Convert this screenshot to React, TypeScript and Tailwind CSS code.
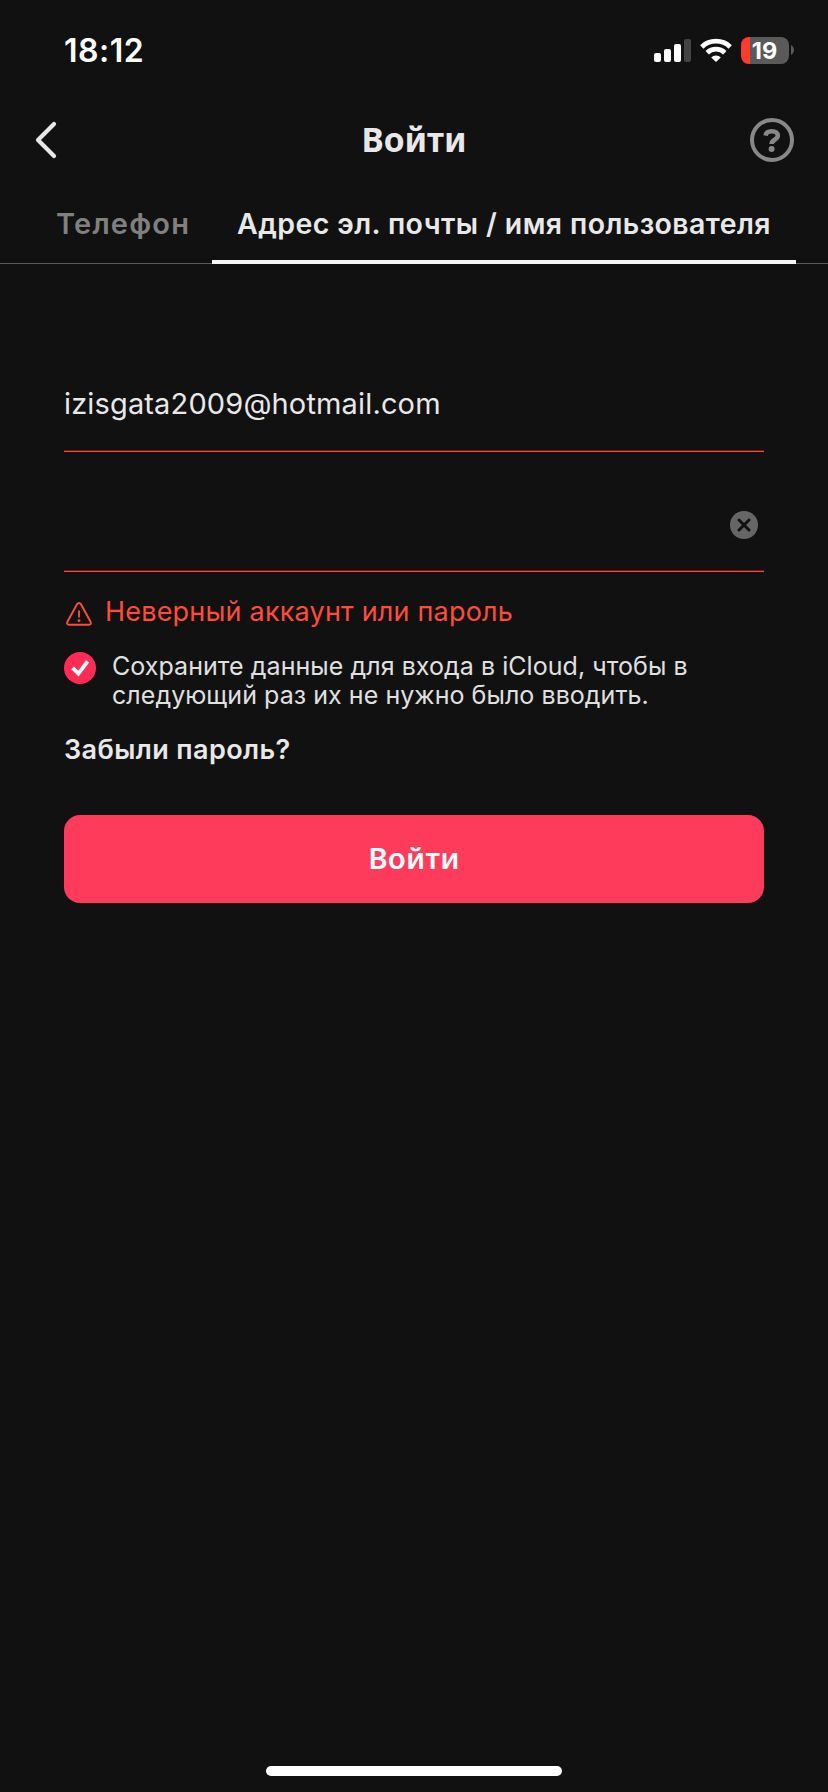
import type { ReactNode } from "react";

function SignalIcon() {
  return (
    <svg className="h-[23px] w-[37px]" viewBox="0 0 37 23">
      <rect x="0" y="14" width="7" height="9" rx="2" fill="#fff" />
      <rect x="10" y="10" width="7" height="13" rx="2" fill="#fff" />
      <rect x="20" y="5" width="7" height="18" rx="2" fill="#fff" />
      <rect x="30" y="0" width="7" height="23" rx="2" fill="#434343" />
    </svg>
  );
}

function WifiIcon() {
  return (
    <svg className="h-[24px] w-[32px]" viewBox="0 0 32 24" fill="none" stroke="#fff" strokeWidth="4.8">
      <path d="M1.8 8.9 A20.5 20.5 0 0 1 30.2 8.9" />
      <path d="M7.2 14.7 A12.7 12.7 0 0 1 24.8 14.7" />
      <path d="M16 24 L11.2 19.4 A6.8 6.8 0 0 1 20.8 19.4 Z" fill="#fff" stroke="none" />
    </svg>
  );
}

function Battery() {
  return (
    <div className="flex items-center gap-[2px]">
      <div className="flex h-[27px] w-[48px] items-center justify-center rounded-[8px] bg-[linear-gradient(to_right,#ff3b30_9px,#5a5a5a_9px)] pt-[1px] pr-[1px] text-[23.5px] leading-none font-bold text-white">
        19
      </div>
      <svg className="h-[10px] w-[3px]" viewBox="0 0 3 10">
        <path d="M0 0 C4 2.2 4 7.8 0 10 Z" fill="#5a5a5a" />
      </svg>
    </div>
  );
}

function StatusBar() {
  return (
    <div className="flex h-[100px] items-center justify-between pr-[34px] pl-[64px]">
      <span className="pt-[1px] text-[32px] leading-none font-semibold tracking-[0.5px] text-white">18:12</span>
      <div className="flex items-center gap-[9px]">
        <SignalIcon />
        <WifiIcon />
        <Battery />
      </div>
    </div>
  );
}

function Header() {
  return (
    <header className="flex h-[80px] items-center justify-between px-[34px]">
      <button className="flex h-[44px] w-[44px] items-center">
        <svg className="h-[38px] w-[24px]" viewBox="0 0 24 38" fill="none" stroke="#e8e8e8" strokeWidth="4.2" strokeLinecap="round" strokeLinejoin="round">
          <path d="M20 3 L4 19 L20 35" />
        </svg>
      </button>
      <h1 className="font-['Noto_Sans'] text-[33.5px] leading-none font-bold text-[#e8e8e8]">Войти</h1>
      <button className="h-[44px] w-[44px]">
        <svg className="h-[44px] w-[44px]" viewBox="0 0 44 44" fill="none" stroke="#888">
          <circle cx="22" cy="22" r="20" strokeWidth="4" />
          <path d="M15.6 17.6 C16 14.6 18.4 13.2 21.8 13.2 C25.4 13.2 27.8 15 27.8 17.8 C27.8 21.6 21.6 21.4 21.6 26" strokeWidth="4.6" />
          <circle cx="21.6" cy="31" r="3" fill="#888" stroke="none" />
        </svg>
      </button>
    </header>
  );
}

function Tabs() {
  return (
    <nav className="flex h-[84px] border-b border-[#5a5a5a] font-semibold whitespace-nowrap">
      <div className="w-[212px] pl-[56px] text-[29px] leading-[88px] tracking-[1.2px] text-[#808080]">Телефон</div>
      <div className="h-[84px] w-[584px] border-b-4 border-[#f6f6f6] pl-[25px] text-[28.5px] leading-[88px] tracking-[0.4px] text-[#e8e8e8]">
        Адрес эл. почты / имя пользователя
      </div>
    </nav>
  );
}

function Field({ children }: { children?: ReactNode }) {
  return (
    <div className="flex h-[120px] items-end border-b border-[#ff4c3a] shadow-[inset_0_-1px_0_#7a1010]">
      <div className="flex h-[93px] w-full items-center pr-[6px]">{children}</div>
    </div>
  );
}

export default function App() {
  return (
    <div className="flex h-[1792px] w-[828px] flex-col bg-[#111111] font-['Inter',sans-serif] text-[#e0e0e0]">
      <StatusBar />
      <Header />
      <Tabs />
      <main className="flex flex-1 flex-col px-[64px] pt-[68px]">
        <Field>
          <span className="pb-[2px] text-[29px] leading-none tracking-[0.15px] text-[#e8e8e8]">izisgata2009@hotmail.com</span>
        </Field>
        <Field>
          <svg className="ml-auto h-[28px] w-[28px]" viewBox="0 0 28 28">
            <circle cx="14" cy="14" r="14" fill="#666" />
            <path d="M9 9 L19 19 M19 9 L9 19" stroke="#111111" strokeWidth="3" strokeLinecap="round" />
          </svg>
        </Field>
        <div className="mt-[22px] flex h-[36px] items-center text-[27px] leading-[36px] tracking-[0.2px] text-[#ff4c3a]">
          <svg className="mt-[4px] mr-[13px] ml-[2px] h-[24px] w-[26px] shrink-0" viewBox="0 0 26 24" fill="none" stroke="#ff4c3a" strokeWidth="1.9" strokeLinejoin="round">
            <path d="M11 2.2 Q13 -0.2 15 2.2 L24.7 20 Q25.4 22.8 23 22.8 L3 22.8 Q0.6 22.8 1.3 20 Z" />
            <path d="M13 8.5 V15.5" />
            <circle cx="13" cy="18.6" r="1.4" fill="#ff4c3a" stroke="none" />
          </svg>
          Неверный аккаунт или пароль
        </div>
        <div className="mt-[22px] flex gap-[16px] text-[25px] leading-[29px] tracking-[0.05px]">
          <svg className="h-[32px] w-[32px] shrink-0" viewBox="0 0 32 32">
            <circle cx="16" cy="16" r="16" fill="#fe2c55" />
            <path d="M8.6 15.8 L14.4 21.6 L23.6 9.4" fill="none" stroke="#fff" strokeWidth="3.8" />
          </svg>
          <p className="whitespace-nowrap">
            Сохраните данные для входа в iCloud, чтобы в
            <br />
            следующий раз их не нужно было вводить.
          </p>
        </div>
        <a className="mt-[22px] text-[27px] leading-[36px] font-semibold tracking-[0.4px] text-[#e8e8e8]">Забыли пароль?</a>
        <button className="mt-[47px] h-[88px] w-full rounded-[16px] bg-[#ff3b5c] pb-[3px] font-['Noto_Sans'] text-[29.5px] leading-none font-semibold tracking-[0.2px] text-white">
          Войти
        </button>
      </main>
      <footer className="flex justify-center pb-[16px]">
        <div className="h-[10px] w-[296px] rounded-full bg-white" />
      </footer>
    </div>
  );
}
